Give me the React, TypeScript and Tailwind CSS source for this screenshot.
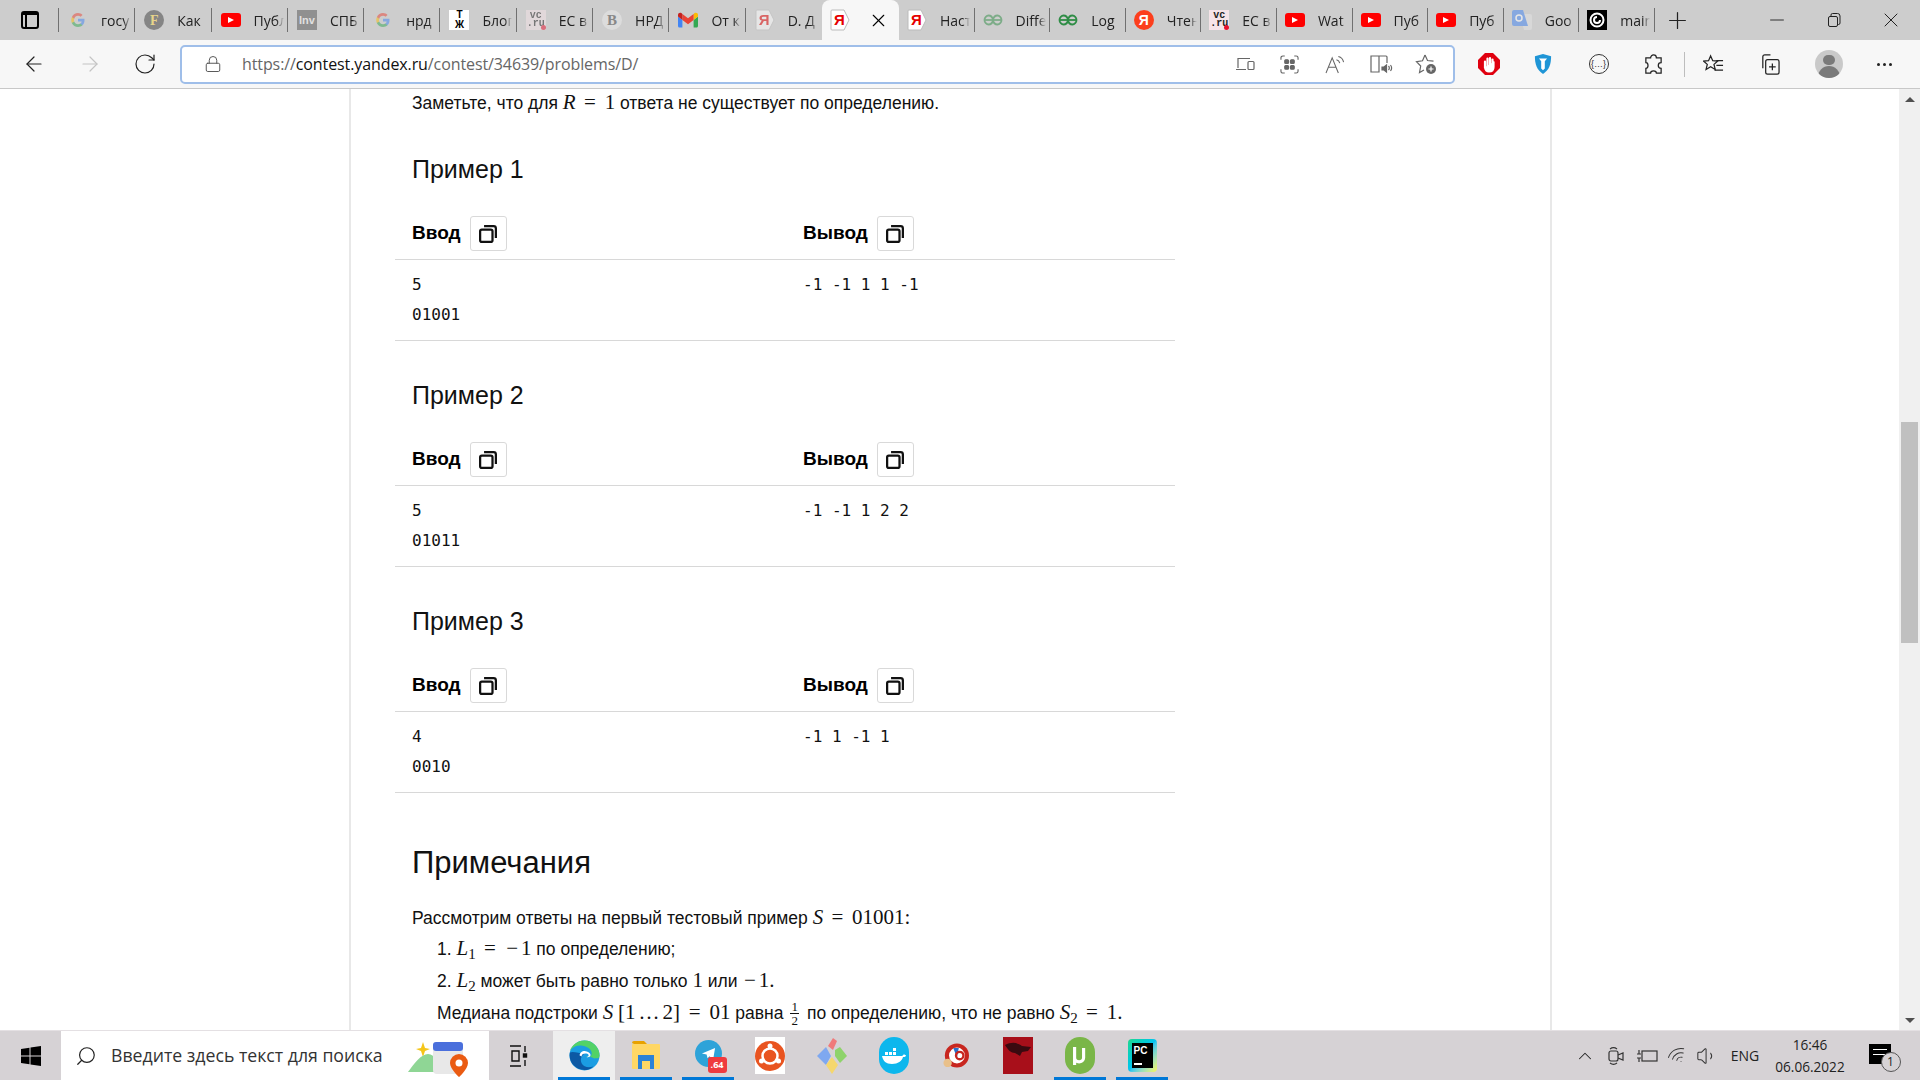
import React from "react";
import { Minus, Plus, RotateCw, X, ArrowLeft, ArrowRight, Lock, Search, ChevronUp, Volume1, Wifi } from "lucide-react";

const tabs = [
  { icon: "g", title: "госу", dim: true },
  { icon: "f", title: "Как" },
  { icon: "yt", title: "Публ" },
  { icon: "inv", title: "СПБ" },
  { icon: "g", title: "нрд", dim: true },
  { icon: "tj", title: "Блог" },
  { icon: "vc", title: "ЕС в", dim: true },
  { icon: "b", title: "НРД" },
  { icon: "gm", title: "От к" },
  { icon: "ya", title: "D. Д", dim: true },
  { icon: "ya", title: "", active: true },
  { icon: "ya", title: "Наст" },
  { icon: "gfg", title: "Diffe", dim: true },
  { icon: "gfg", title: "Log" },
  { icon: "yar", title: "Чтен" },
  { icon: "vc", title: "ЕС в" },
  { icon: "yt", title: "Wat" },
  { icon: "yt", title: "Пуб" },
  { icon: "yt", title: "Пуб" },
  { icon: "gt", title: "Goo", dim: true },
  { icon: "main", title: "main" },
];

const examples = [
  { n: 1, input: ["5", "01001"], output: "-1 -1 1 1 -1" },
  { n: 2, input: ["5", "01011"], output: "-1 -1 1 2 2" },
  { n: 3, input: ["4", "0010"], output: "-1 1 -1 1" },
];

const Favicon = ({ kind }: { kind: string }) => {
  if (kind === "g")
    return (
      <svg viewBox="0 0 20 20" className="w-5 h-5 shrink-0">
        <path d="M16.5 10.2c0-.5 0-1-.1-1.4H10v2.700h3.700c-.2.900-.6 1.600-1.400 2.100v1.700h2.200c1.300-1.200 2-3 2-5.100z" fill="#4285f4" />
        <path d="M10 17c1.900 0 3.400-.6 4.500-1.700l-2.200-1.700c-.6.400-1.400.7-2.300.7-1.800 0-3.300-1.200-3.800-2.800H3.900v1.700C5 15.500 7.300 17 10 17z" fill="#34a853" />
        <path d="M6.200 11.500c-.3-.9-.3-1.900 0-2.800V7H3.900c-.9 1.900-.9 4.100 0 6.100z" fill="#fbbc05" />
        <path d="M10 5.800c1 0 1.900.3 2.600 1l1.900-1.900C13.400 3.700 11.800 3 10 3 7.300 3 5 4.500 3.900 6.900l2.300 1.800C6.700 7 8.200 5.800 10 5.800z" fill="#ea4335" />
      </svg>
    );
  if (kind === "f")
    return (
      <div className="w-5 h-5 shrink-0 rounded-full bg-[#858585] flex items-center justify-center text-[14px] font-bold text-[#e8d58a] font-['Liberation_Serif',serif]">F</div>
    );
  if (kind === "yt")
    return (
      <div className="w-5 h-[14px] shrink-0 rounded-[3px] bg-[#ff0000] flex items-center justify-center">
        <div className="w-0 h-0 border-y-[3.500px] border-y-transparent border-l-[6px] border-l-white" />
      </div>
    );
  if (kind === "inv")
    return (
      <div className="w-5 h-5 shrink-0 bg-[#909090] flex items-center justify-center text-[11px] font-bold text-[#e0e0e0] font-['Liberation_Sans',sans-serif]">Inv</div>
    );
  if (kind === "tj")
    return (
      <div className="w-5 h-5 shrink-0 bg-white flex flex-col items-center justify-center text-black font-bold font-['Liberation_Sans',sans-serif] text-[10px] leading-[10px]">
        <span>Т</span>
        <span>Ж</span>
      </div>
    );
  if (kind === "vc")
    return (
      <div className="relative w-5 h-5 shrink-0 bg-[#f6e4e8] flex flex-col items-center justify-center text-[#222] font-bold font-['Liberation_Mono',monospace] text-[10px] leading-[8px]">
        <span>vc</span>
        <span>.ru</span>
        <div className="absolute right-0 bottom-0 w-[5px] h-[5px] rounded-full bg-[#e8112d]" />
      </div>
    );
  if (kind === "b")
    return (
      <div className="w-5 h-5 shrink-0 rounded-full bg-[#dcdcdc] flex items-center justify-center text-[15px] font-bold text-[#888] font-['Liberation_Serif',serif]">B</div>
    );
  if (kind === "gm")
    return (
      <svg viewBox="0 0 20 16" className="w-5 h-4 shrink-0">
        <path d="M1.400 15.500h3V8L0 4.500v9.500c0 .8.600 1.500 1.400 1.500z" fill="#4285f4" />
        <path d="M15.600 15.500h3c.8 0 1.400-.7 1.400-1.500V4.500L15.600 8z" fill="#34a853" />
        <path d="M15.600 2v6L20 4.500V2.800c0-1.800-2-2.800-3.400-1.700z" fill="#fbbc04" />
        <path d="M4.400 8V2L10 6.200 15.600 2v6L10 12.200z" fill="#ea4335" />
        <path d="M0 2.800v1.700L4.400 8V2l-1-.9C2 0 0 1 0 2.800z" fill="#c5221f" />
      </svg>
    );
  if (kind === "ya")
    return (
      <div className="relative w-5 h-[22px] shrink-0">
        <svg viewBox="0 0 20 22" className="absolute inset-0 w-5 h-[22px]">
          <path d="M2 1h12l5 10-5 10H2a1 1 0 0 1-1-1V2a1 1 0 0 1 1-1z" fill="#fff" stroke="#bbb" />
        </svg>
        <span className="absolute left-[4px] top-[1px] text-[15px] leading-[20px] font-bold text-[#e60000] font-['Liberation_Sans',sans-serif]">Я</span>
      </div>
    );
  if (kind === "gfg")
    return (
      <svg viewBox="0 0 20 12" className="w-5 h-3 shrink-0" fill="none" stroke="#2f8d46" strokeWidth="1.800">
        <path d="M1 6h18" />
        <path d="M10 6c-.5-3-2.500-4.500-4.500-4.500S1.500 3.500 1.500 6 3.500 10.500 5.500 10.500 9.500 9 10 6z" />
        <path d="M10 6c.5-3 2.500-4.500 4.500-4.500s4 2 4 4.500-2 4.500-4 4.500S10.500 9 10 6z" />
      </svg>
    );
  if (kind === "yar")
    return (
      <div className="w-5 h-5 shrink-0 rounded-full bg-[#fc3f1d] flex items-center justify-center text-[14px] font-bold text-white font-['Liberation_Sans',sans-serif]">Я</div>
    );
  if (kind === "gt")
    return (
      <svg viewBox="0 0 20 20" className="w-5 h-5 shrink-0">
        <path d="M8 4h10a2 2 0 0 1 2 2v12a2 2 0 0 1-2 2h-6z" fill="#e4e4e4" />
        <path d="M2 0h9l5 16H2a2 2 0 0 1-2-2V2a2 2 0 0 1 2-2z" fill="#4285f4" />
        <circle cx="7" cy="8" r="3" fill="none" stroke="#fff" strokeWidth="1.500" />
      </svg>
    );
  return (
    <svg viewBox="0 0 20 20" className="w-5 h-5 shrink-0">
      <rect width="20" height="20" fill="#000" />
      <circle cx="10" cy="10" r="6.500" fill="none" stroke="#fff" strokeWidth="2" />
      <path d="M13 10a3 3 0 1 1-3-3" fill="none" stroke="#fff" strokeWidth="2" />
    </svg>
  );
};

const TabItem = ({ tab, index }: { tab: (typeof tabs)[number]; index: number }) => {
  if (tab.active) {
    return (
      <div className="w-[77px] h-10 shrink-0 bg-[#f7f7f7] rounded-t-lg flex items-center pl-[8px]">
        <Favicon kind={tab.icon} />
        <X className="w-[21px] h-[21px] ml-[18px] text-black" strokeWidth={1.3} />
      </div>
    );
  }
  return (
    <div className={index < 10 ? "w-[76.300px] h-10 shrink-0 flex items-center pl-[9px]" : "w-[75.600px] h-10 shrink-0 flex items-center pl-[8px]"}>
      <div className={tab.dim ? "opacity-50" : ""}>
        <Favicon kind={tab.icon} />
      </div>
      <div className="ml-[13px] w-[30px] overflow-hidden whitespace-nowrap text-[14px] text-[#222] [mask-image:linear-gradient(to_right,black_75%,transparent)]">
        {tab.title}
      </div>
      <div className={index === 9 ? "ml-auto w-px h-6" : "ml-auto w-px h-6 bg-[#707070]"} />
    </div>
  );
};

const TabBar = () => (
  <div className="h-10 bg-[#cdcdcd] flex items-center shrink-0">
    <div className="w-[59px] h-10 flex items-center justify-center relative">
      <div className="w-[18px] h-[18px] rounded-[3px] border-2 border-black border-t-[4px] flex">
        <div className="w-[4px] border-r-2 border-black" />
      </div>
      <div className="absolute right-0 w-px h-6 bg-[#707070]" />
    </div>
    {tabs.map((t, i) => (
      <TabItem key={i} tab={t} index={i} />
    ))}
    <div className="w-[46px] flex items-center justify-center">
      <Plus className="w-[27px] h-[27px] text-[#222]" strokeWidth={1.1} />
    </div>
    <div className="flex-1" />
    <div className="w-[57px] flex justify-center"><Minus className="w-[22px] h-[22px] text-[#222]" strokeWidth={1.0} /></div>
    <div className="w-[57px] flex justify-center">
      <svg viewBox="0 0 14 14" className="w-[14px] h-[14px]" fill="none" stroke="#222">
        <rect x="1.500" y="3.500" width="9" height="10" rx="1.500" />
        <path d="M4 3.500V2a1.500 1.500 0 0 1 1.500-1.500h5A2.500 2.500 0 0 1 13 3v7a1.500 1.500 0 0 1-1.500 1.500h-1" />
      </svg>
    </div>
    <div className="w-[58px] flex justify-center"><X className="w-6 h-6 text-[#222]" strokeWidth={1.0} /></div>
  </div>
);

const Slot = ({ w, children }: { w: string; children: React.ReactNode }) => (
  <div className={`${w} h-full flex items-center justify-center shrink-0`}>{children}</div>
);

const AddressBar = () => (
  <div className="w-[1275px] h-[39px] bg-white border-2 border-[#9fbee9] rounded-[5px] flex items-center shrink-0">
    <div className="w-[60px] h-full flex items-center pl-[22px]">
      <Lock className="w-[18px] h-[18px] text-[#555]" strokeWidth={1.3} />
    </div>
    <div className="text-[16px] text-[#666] font-['Open_Sans',sans-serif] whitespace-nowrap tracking-[-0.1px]">
      https://<span className="text-[#111]">contest.yandex.ru</span>/contest/34639/problems/D/
    </div>
    <div className="flex-1" />
    <div className="flex items-center h-full pr-[5px]">
      <Slot w="w-[45px]">
        <svg viewBox="0 0 20 16" className="w-5 h-4" fill="none" stroke="#666" strokeWidth="1.200">
          <path d="M3 12V2.500h12M1 13.500h10" />
          <rect x="13" y="5.500" width="6" height="8" rx="1" />
        </svg>
      </Slot>
      <Slot w="w-[45px]">
        <svg viewBox="0 0 20 20" className="w-[19px] h-[19px]" fill="none" stroke="#666" strokeWidth="1.200">
          <rect x="5" y="5" width="4" height="4" rx="1" fill="#666" />
          <rect x="11" y="5" width="4" height="4" rx="1" fill="#666" />
          <rect x="5" y="11" width="4" height="4" rx="1" fill="#666" />
          <rect x="11" y="11" width="4" height="4" rx="1" fill="#666" />
          <path d="M1 5V3a2 2 0 0 1 2-2h2M15 1h2a2 2 0 0 1 2 2v2M19 15v2a2 2 0 0 1-2 2h-2M5 19H3a2 2 0 0 1-2-2v-2" />
        </svg>
      </Slot>
      <Slot w="w-[46px]">
        <svg viewBox="0 0 22 20" className="w-[21px] h-[19px]" fill="none" stroke="#666" strokeWidth="1.100">
          <path d="M1 19 7.500 3 14 19M3.500 13h8" />
          <path d="M12 5c2 .5 3 1.500 3.500 3.500M14 1.500c3 .8 5 3 5.500 6" />
        </svg>
      </Slot>
      <Slot w="w-[45px]">
        <svg viewBox="0 0 24 20" className="w-[24px] h-5" fill="none" stroke="#666" strokeWidth="1.200">
          <path d="M10 18H2V2h8v16zM10 2h7a1 1 0 0 1 1 1v6" />
          <path d="M13 13h2l2.500-2v7L15 16h-2z" fill="#666" />
          <path d="M19.500 12c1 1.200 1 2.800 0 4M21.500 11c1.500 2 1.500 4 0 6" />
        </svg>
      </Slot>
      <Slot w="w-[45px]">
        <svg viewBox="0 0 22 22" className="w-[22px] h-[22px]" fill="none" stroke="#666" strokeWidth="1.200">
          <path d="M10 2l2.500 5.500 6 .7M9 17l-4.500 2.500 1.200-6.500-4.200-4.300 6-.9L10 2" />
          <circle cx="16" cy="16" r="5" fill="#666" stroke="none" />
          <path d="M16 13.500v5M13.500 16h5" stroke="#fff" />
        </svg>
      </Slot>
    </div>
  </div>
);

const Toolbar = () => (
  <div className="h-[48px] bg-[#f7f7f7] border-b border-[#c8c8c8] flex items-center shrink-0 box-content">
    <div className="w-[180px] flex h-full pl-[11px]">
      <Slot w="w-[46px]"><ArrowLeft className="w-[24px] h-[24px] text-[#222]" strokeWidth={1.200} /></Slot>
      <Slot w="w-[66px]"><ArrowRight className="w-[24px] h-[24px] text-[#c4c4c4]" strokeWidth={1.200} /></Slot>
      <Slot w="w-[44px]"><RotateCw className="w-[24px] h-[24px] text-[#222]" strokeWidth={1.200} /></Slot>
    </div>
    <AddressBar />
    <div className="flex items-center h-full pl-[8px]">
      <Slot w="w-[52px]">
        <svg viewBox="0 0 22 22" className="w-[22px] h-[22px]">
          <path d="M7 0h8l7 7v8l-7 7H7l-7-7V7z" fill="#e0000f" />
          <path d="M7 15V8.500M9.500 13V5.500M12 13V5M14.500 13V6.500M7 14c0 3 2 4.500 4 4.500s4.500-1 4.500-4.500V9" stroke="#fff" strokeWidth="2.200" strokeLinecap="round" fill="#fff" />
        </svg>
      </Slot>
      <Slot w="w-[56px]">
        <svg viewBox="0 0 20 24" className="w-[18px] h-[22px]">
          <path d="M10 1 1 3.500C1 12 3 19 10 23c7-4 9-11 9-19.500z" fill="#1f95d6" />
          <path d="M5.500 6h9l-2.500 3v8l-2 2-2-2V9z" fill="#fff" />
        </svg>
      </Slot>
      <Slot w="w-[55px]">
        <div className="w-5 h-5 rounded-full border border-[#333] flex items-center justify-center text-[9px] leading-none text-[#333] font-['Liberation_Sans',sans-serif]">{"{…}"}</div>
      </Slot>
      <Slot w="w-[55px]">
        <svg viewBox="0 0 22 22" className="w-[21px] h-[21px]" fill="none" stroke="#222" strokeWidth="1.300">
          <path d="M8 4c0-4 6-4 6 0h5v5c-4 0-4 6 0 6v5h-5c0-3-6-3-6 0H3v-5c3 0 3-6 0-6V4z" />
        </svg>
      </Slot>
      <Slot w="w-[7px]"><div className="w-px h-[25px] bg-[#bdbdbd]" /></Slot>
      <Slot w="w-[51px]">
        <svg viewBox="0 0 22 22" className="w-[21px] h-[21px]" fill="none" stroke="#222" strokeWidth="1.300">
          <path d="M8 2 10.200 7l5.300.4-4 3.500 1.300 5.300L8 13.400l-4.800 2.800 1.300-5.300-4-3.500L5.800 7z" />
          <path d="M14 7h7M14 12h7M12 17h9" />
        </svg>
      </Slot>
      <Slot w="w-[61px]">
        <svg viewBox="0 0 22 24" className="w-[21px] h-[23px]" fill="none" stroke="#222" strokeWidth="1.300">
          <path d="M4 16V4a2 2 0 0 1 2-2h6" />
          <rect x="7" y="7" width="14" height="15" rx="2" />
          <path d="M14 11v7M10.500 14.500h7" />
        </svg>
      </Slot>
      <Slot w="w-[57px]">
        <div className="w-7 h-7 rounded-full bg-[#c9c9c9] overflow-hidden flex flex-col items-center">
          <div className="w-[12px] h-[12px] mt-[5px] rounded-full bg-[#7a7a7a]" />
          <div className="w-[22px] h-[14px] mt-[1px] rounded-t-full bg-[#7a7a7a]" />
        </div>
      </Slot>
      <Slot w="w-[55px]">
        <div className="flex gap-[3px]">
          <div className="w-[3px] h-[3px] rounded-full bg-[#222]" />
          <div className="w-[3px] h-[3px] rounded-full bg-[#222]" />
          <div className="w-[3px] h-[3px] rounded-full bg-[#222]" />
        </div>
      </Slot>
    </div>
  </div>
);

const M = ({ children }: { children: React.ReactNode }) => (
  <span className="font-['Liberation_Serif',serif] text-[21px] leading-none">{children}</span>
);
const I = ({ children }: { children: React.ReactNode }) => (
  <span className="font-['Liberation_Serif',serif] italic text-[21px] leading-none">{children}</span>
);
const Sub = ({ children }: { children: React.ReactNode }) => (
  <span className="font-['Liberation_Serif',serif] text-[15px] leading-none relative top-[4px]">{children}</span>
);
const Eq = () => <span className="mx-[3.500px]">=</span>;
const Neg = () => <span className="ml-[1.500px] mr-[3px]">−</span>;

const CopyButton = () => (
  <div className="w-[37px] h-[35px] ml-[9px] rounded-[3px] border border-[#d9d9d9] bg-white flex items-center justify-center">
    <svg viewBox="0 0 16 16" className="w-[18px] h-[18px]" fill="none" stroke="#111" strokeWidth="2">
      <rect x="1" y="4" width="11" height="11" rx="1.500" />
      <path d="M4.500 1H13a2 2 0 0 1 2 2v8.500" />
    </svg>
  </div>
);

const Example = ({ ex }: { ex: (typeof examples)[number] }) => (
  <div className={ex.n === 1 ? "mt-[37px]" : "mt-[39px]"}>
    <h3 className="text-[25px] leading-[30px] pl-[17px] text-[#111]">Пример {ex.n}</h3>
    <div className="w-[780px] mt-[32px] border-b border-[#d8d8d8]">
      <div className="flex pb-[8px]">
        <div className="w-[391px] pl-[17px] flex items-center font-bold text-[19px] text-black">Ввод<CopyButton /></div>
        <div className="pl-[17px] flex items-center font-bold text-[19px] text-black">Вывод<CopyButton /></div>
      </div>
    </div>
    <div className="w-[780px] flex pt-[10px] pb-[10px] border-b border-[#d8d8d8] font-['DejaVu_Sans_Mono',monospace] text-[16px] leading-[30px] text-[#111]">
      <div className="w-[391px] pl-[17px]">
        {ex.input.map((l) => (
          <div key={l}>{l}</div>
        ))}
      </div>
      <div className="pl-[17px] whitespace-pre">{ex.output}</div>
    </div>
  </div>
);

const Page = () => (
  <div className="flex-1 flex min-h-0 bg-white overflow-hidden">
    <div className="w-[349px] shrink-0" />
    <div className="w-[1203px] shrink-0 border-x-2 border-[#e8e8e8] pl-[44px] font-['Liberation_Sans',Arial,sans-serif] text-[#111] text-[17.500px]">
      <p className="h-[28px] leading-[28px] pl-[17px] whitespace-nowrap">
        Заметьте, что для <I>R</I> <M><Eq /> 1</M> ответа не существует по определению.
      </p>
      {examples.map((ex) => (
        <Example key={ex.n} ex={ex} />
      ))}
      <h2 className="pl-[17px] mt-[50px] text-[31px] leading-[40px] text-[#111]">Примечания</h2>
      <p className="pl-[17px] mt-[20px] h-[30px] leading-[30px] whitespace-nowrap">
        Рассмотрим ответы на первый тестовый пример <I>S</I> <M><Eq /> 01001:</M>
      </p>
      <div className="pl-[42px] whitespace-nowrap">
        <div className="h-[32px] leading-[32px]">1. <I>L</I><Sub>1</Sub> <M><Eq /> <Neg />1</M> по определению;</div>
        <div className="h-[32px] leading-[32px]">2. <I>L</I><Sub>2</Sub> может быть равно только <M>1</M> или <M><Neg />1.</M></div>
        <div className="h-[32px] leading-[32px] flex items-center">
          <span>Медиана подстроки <I>S</I> <M>[1<span className="mx-[3px]">…</span>2] <Eq /> 01</M> равна</span>
          <span className="inline-flex flex-col items-center ml-[7px] mr-[8px] font-['Liberation_Serif',serif] text-[13px] leading-[13px]">
            <span className="border-b border-[#111] px-[1px]">1</span>
            <span>2</span>
          </span>
          <span>по определению, что не равно <I>S</I><Sub>2</Sub> <M><Eq /> 1.</M></span>
        </div>
      </div>
    </div>
    <div className="flex-1" />
    <div className="w-[21px] shrink-0 bg-[#f0f0f0] flex flex-col items-center">
      <div className="w-0 h-0 mt-[8px] border-x-[5px] border-x-transparent border-b-[5px] border-b-[#505050]" />
      <div className="w-[17px] h-[221px] mt-[320px] bg-[#c0c0c0]" />
      <div className="flex-1" />
      <div className="w-0 h-0 mb-[7px] border-x-[5px] border-x-transparent border-t-[5px] border-t-[#505050]" />
    </div>
  </div>
);

const TaskIcon = ({ children, line, active }: { children: React.ReactNode; line?: boolean; active?: boolean }) => (
  <div className={active ? "w-[62px] h-full flex items-center justify-center relative bg-[#eeeeee]" : "w-[62px] h-full flex items-center justify-center relative"}>
    {children}
    {line && <div className="absolute bottom-0 left-[5px] right-[5px] h-[3px] bg-[#0078d7]" />}
  </div>
);

const Taskbar = () => (
  <div className="h-[50px] bg-[#d6d2d5] border-t border-[#e4e0e3] flex items-stretch shrink-0 font-['Open_Sans',sans-serif] text-[#222]">
    <div className="w-[61px] flex items-center justify-center">
      <svg viewBox="0 0 20 20" className="w-5 h-5" fill="#000">
        <path d="M0 3 8.500 1.800v7.700H0zM9.500 1.600 20 0v9.500H9.500zM0 10.500h8.500v7.700L0 17zM9.500 10.500H20V20L9.500 18.400z" />
      </svg>
    </div>
    <div className="w-[428px] bg-white flex items-center pl-[14px]">
      <Search className="w-[22px] h-[22px] text-[#222] -scale-x-100" strokeWidth={1.300} />
      <span className="ml-[14px] text-[17.700px] text-[#333] whitespace-nowrap">Введите здесь текст для поиска</span>
      <svg viewBox="0 0 62 44" className="w-[62px] h-[44px] ml-[24px]">
        <path d="M14 14l2-6 2 6 5 1-5 2-2 6-2-6-5-2z" fill="#f5c518" />
        <path d="M1 38c6-8 13-18 20-18s12 10 14 18z" fill="#8fd695" />
        <rect x="26" y="10" width="30" height="30" rx="4" fill="#e8e8e8" />
        <rect x="26" y="8" width="30" height="9" rx="3" fill="#4a6fdc" />
        <path d="M52 20a9 9 0 0 1 9 9c0 6-9 14-9 14s-9-8-9-14a9 9 0 0 1 9-9z" fill="#ea5b12" />
        <circle cx="52" cy="29" r="3.500" fill="#fff" />
      </svg>
    </div>
    <div className="w-[64px] flex items-center justify-center pr-[4px]">
      <svg viewBox="0 0 20 22" className="w-5 h-[22px]" fill="none" stroke="#111" strokeWidth="1.400">
        <path d="M1 1h11M1 21h11M3 6h7v10H3zM16 1v6M16 15v6" />
        <rect x="14.500" y="9" width="3" height="3" fill="#111" />
      </svg>
    </div>
    <TaskIcon line active>
      <svg viewBox="0 0 32 32" className="w-[31px] h-[31px]">
        <circle cx="16" cy="16" r="15.500" fill="#1b9de2" />
        <path d="M31.500 16C31.500 7 24 .5 16 .5 9 .5 3 5 1 11c3-4 8-6 13-5 7 1 11 6 9 10-1 2-4 2-5 1 4 0 6 1 8 2 3-.5 5.500 1 5.500-3z" fill="#52d267" />
        <path d="M1 13c-2 9 5 18 15 18 3 0 7-1 9-4-4 2-10 1-12-3-2-4 0-8 3-10-6 0-12-3-15-1z" fill="#0c59a4" />
        <path d="M11 16c0-3 3-5 6-4.500 4 .5 6 3 5 5-.5 1-2 1.500-4 1 3 0 3-3 0-3.500-3-.5-5 1-5 3z" fill="#fff" />
      </svg>
    </TaskIcon>
    <TaskIcon line>
      <svg viewBox="0 0 28 30" className="w-[28px] h-[30px]">
        <path d="M0 2a2 2 0 0 1 2-2h10l3 3H2z" fill="#e8a200" />
        <rect y="3" width="28" height="25" rx="1" fill="#ffd765" />
        <path d="M6 14h16v14h-4v-8h-8v8H6z" fill="#2c82d6" />
      </svg>
    </TaskIcon>
    <TaskIcon line>
      <div className="relative w-[27px] h-[27px] -translate-y-[2px]">
        <div className="w-[27px] h-[27px] rounded-full bg-[#2ea3d9] flex items-center justify-center">
          <svg viewBox="0 0 16 16" className="w-[15px] h-[15px]"><path d="M1 8 15 2l-2 12-4-3-2 2-1-4z" fill="#fff" /></svg>
        </div>
        <div className="absolute -right-[5px] -bottom-[6px] w-[19px] h-[16px] rounded-[3px] bg-[#ef3b3f] text-white text-[9px] font-bold leading-[16px] text-center">.64</div>
      </div>
    </TaskIcon>
    <TaskIcon>
      <div className="w-[30px] h-[37px] bg-white flex items-center justify-center">
        <svg viewBox="0 0 30 30" className="w-[30px] h-[30px]">
          <circle cx="15" cy="15" r="15" fill="#e95420" />
          <circle cx="15" cy="15" r="7.500" fill="none" stroke="#fff" strokeWidth="2.500" />
          <circle cx="15" cy="5" r="2.500" fill="#fff" />
          <circle cx="6.500" cy="20" r="2.500" fill="#fff" />
          <circle cx="23.500" cy="20" r="2.500" fill="#fff" />
        </svg>
      </div>
    </TaskIcon>
    <TaskIcon>
      <svg viewBox="0 0 30 36" className="w-[30px] h-[36px]">
        <path d="M0 18 9 9l5 9-5 9z" fill="#7fa8f0" />
        <path d="M11 8 16 0l4 3-4 9z" fill="#f07a7a" />
        <path d="M18 12l5-3 7 9-7 7-5-7z" fill="#8ed36b" />
        <path d="M9 27l6-8 6 8-6 9z" fill="#f5d76e" />
      </svg>
    </TaskIcon>
    <TaskIcon>
      <div className="w-[30px] h-[37px] rounded-full bg-[#0db7ed] flex items-center justify-center">
        <svg viewBox="0 0 24 16" className="w-[24px] h-[16px]" fill="#fff">
          <path d="M0 8h19c1 0 2-.5 2.500-1.500C23 6.500 24 7 24 8c-1 1-2 1-3 1-1 4-5 7-11 7C4 16 1 13 0 8z" />
          <rect x="3" y="4" width="3" height="3" /><rect x="7" y="4" width="3" height="3" /><rect x="11" y="4" width="3" height="3" /><rect x="11" y="0" width="3" height="3" />
        </svg>
      </div>
    </TaskIcon>
    <TaskIcon>
      <svg viewBox="0 0 28 32" className="w-[26px] h-[31px]">
        <circle cx="15" cy="16" r="13" fill="#c8261f" />
        <circle cx="15" cy="16" r="8.500" fill="#fff" />
        <path d="M11 8h6l-2 10z" fill="#2a6fc9" />
        <circle cx="18" cy="16" r="4" fill="none" stroke="#c8261f" strokeWidth="2.500" />
        <circle cx="5" cy="24" r="4.500" fill="#e9c08a" />
      </svg>
    </TaskIcon>
    <TaskIcon>
      <svg viewBox="0 0 30 37" className="w-[30px] h-[37px]">
        <rect width="30" height="37" fill="#a80f1a" />
        <path d="M2 8c6-3 12-3 17 1l9 1-3 4-6 1-2 4-5-3c-4 0-7-3-10-8z" fill="#3a0a10" />
      </svg>
    </TaskIcon>
    <TaskIcon line>
      <div className="w-[30px] h-[37px] rounded-full bg-[#7ab648] flex items-center justify-center">
        <svg viewBox="0 0 20 24" className="w-[18px] h-[22px]" fill="none" stroke="#fff" strokeWidth="3.500">
          <path d="M4 2v12c0 6 10 6 10 0V3M4 14v8" />
        </svg>
      </div>
    </TaskIcon>
    <TaskIcon line>
      <div className="w-[29px] h-[33px] rounded-[4px] bg-gradient-to-br from-[#21d789] via-[#07c3f2] to-[#fcf84a] flex items-center justify-center">
        <div className="w-[21px] h-[25px] bg-black text-white text-[10px] font-bold leading-[11px] pl-[2px] pt-[2px] font-['Liberation_Sans',sans-serif]">
          PC
          <div className="w-[8px] h-[2px] bg-white mt-[7px]" />
        </div>
      </div>
    </TaskIcon>
    <div className="flex-1" />
    <div className="flex items-center h-full text-[14px] text-[#222]">
      <Slot w="w-[32px]"><ChevronUp className="w-[22px] h-[22px]" strokeWidth={1.100} /></Slot>
      <Slot w="w-[32px]">
        <svg viewBox="0 0 18 20" className="w-[18px] h-5" fill="none" stroke="#333" strokeWidth="1.200">
          <rect x="1" y="5" width="9" height="10" rx="2" /><path d="M10 9l5-2v7l-5-2M2 3c2-1.500 5-1.500 7 0M2 17c2 1.500 5 1.500 7 0" />
        </svg>
      </Slot>
      <Slot w="w-[28px]">
        <svg viewBox="0 0 22 14" className="w-[22px] h-[14px]" fill="none" stroke="#333" strokeWidth="1.200">
          <rect x="6" y="2" width="15" height="10" /><path d="M1 5h4M1 9h4M3 1v4M3 9v4" />
        </svg>
      </Slot>
      <Slot w="w-[32px]"><Wifi className="w-[21px] h-[21px] text-[#333] -rotate-[30deg]" strokeWidth={1.100} /></Slot>
      <Slot w="w-[28px]"><Volume1 className="w-[22px] h-[22px] text-[#333]" strokeWidth={1.100} /></Slot>
      <div className="w-[48px] text-center text-[14px]">ENG</div>
      <div className="w-[82px] text-center text-[13.600px] leading-[22px]">
        <div>16:46</div>
        <div>06.06.2022</div>
      </div>
      <div className="w-[69px] h-full flex items-center justify-center">
        <div className="relative w-[22px] h-[20px] bg-black -translate-x-[6px] -translate-y-[2px]">
          <div className="absolute left-[4px] right-[4px] top-[5px] h-[6px] border-y border-white" />
          <div className="absolute -right-[10px] -bottom-[8px] w-[20px] h-[20px] rounded-full border border-[#555] bg-[#d6d2d5] text-center text-[12px] leading-[18px]">1</div>
        </div>
      </div>
    </div>
  </div>
);

export default function App() {
  return (
    <div className="w-[1920px] h-[1080px] flex flex-col overflow-hidden font-['Open_Sans',sans-serif]">
      <TabBar />
      <Toolbar />
      <Page />
      <Taskbar />
    </div>
  );
}
